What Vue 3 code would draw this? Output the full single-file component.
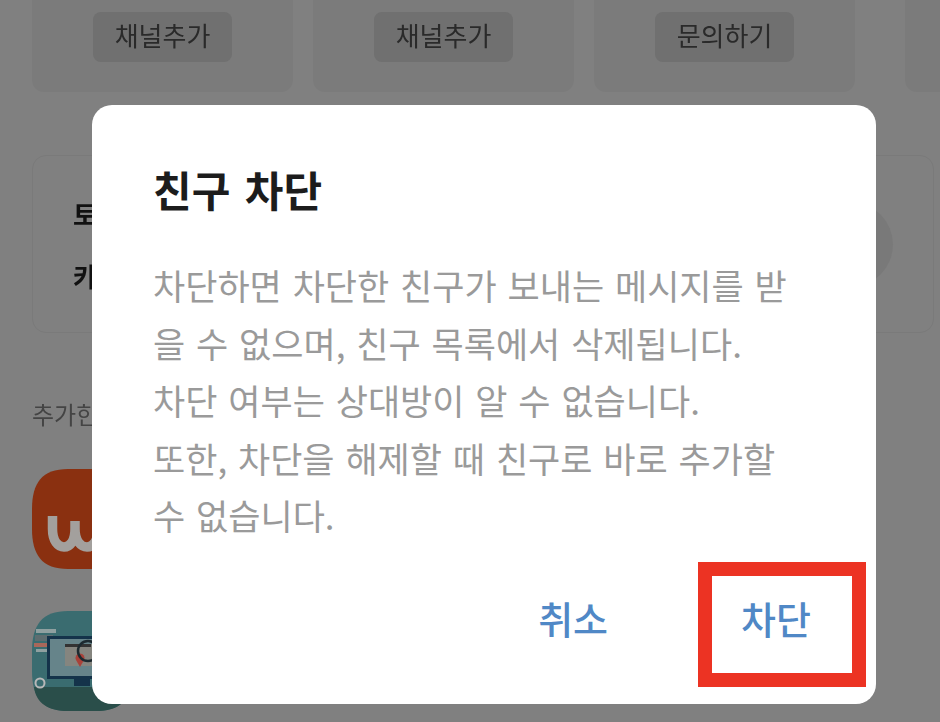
<script setup>
const cards = ['채널추가', '채널추가', '문의하기', '']
const lines = [
  '차단하면 차단한 친구가 보내는 메시지를 받',
  '을 수 없으며, 친구 목록에서 삭제됩니다.',
  '차단 여부는 상대방이 알 수 없습니다.',
  '또한, 차단을 해제할 때 친구로 바로 추가할',
  '수 없습니다.'
]
</script>

<template>
  <div class="screen">
    <div class="page">
      <div class="cards">
        <div v-for="(c, i) in cards" :key="i" class="card" :class="{ last: !c }">
          <div v-if="c" class="chip">{{ c }}</div>
        </div>
      </div>
      <div class="panel">
        <div class="panel-text">
          <div>토스페이</div>
          <div>카카오페이</div>
        </div>
        <div class="pill"></div>
      </div>
      <div class="section">추가한 채널</div>
      <div class="apps">
        <svg class="app" viewBox="0 0 100 100">
          <path d="M36 0H64C90 0 100 14 100 40V60C100 86 90 100 64 100H36C10 100 0 86 0 60V40C0 14 10 0 36 0Z" fill="#8a3010" />
          <path d="M20.500 47V60C20.500 72 26 78 32 78C38 78 43 72 43 60V52M43 60C43 72 49 78 55 78C61 78 66 72 66 60V47" fill="none" stroke="#a3a09d" stroke-width="9.500" />
        </svg>
        <svg class="app" viewBox="0 0 100 100">
          <path d="M36 0H64C90 0 100 14 100 40V60C100 86 90 100 64 100H36C10 100 0 86 0 60V40C0 14 10 0 36 0Z" fill="#3a6c70" />
          <path d="M2 76H98C96 92 84 100 64 100H36C16 100 4 92 2 76Z" fill="#2a4e4a" />
          <rect x="4" y="18" width="20" height="4" fill="#8fa0a0" />
          <rect x="3" y="24" width="18" height="6" fill="#5d6d70" />
          <rect x="2" y="32" width="20" height="4" fill="#a8675a" />
          <rect x="4" y="38" width="12" height="3" fill="#8fa0a0" />
          <circle cx="8" cy="72" r="4.500" fill="none" stroke="#b8b8b8" stroke-width="2" />
          <rect x="15" y="25" width="82" height="43" fill="#14334a" />
          <rect x="18" y="28" width="76" height="37" fill="#66848a" />
          <rect x="33" y="33" width="50" height="22" fill="#85857f" />
          <rect x="33" y="33" width="26" height="3" fill="#333" />
          <path d="M44 49a4.500 4.500 0 1 1 8 0l-4 7Z" fill="#a9423a" />
          <circle cx="56" cy="40" r="10" fill="none" stroke="#1d2a30" stroke-width="2.500" />
          <rect x="42" y="68" width="16" height="7" fill="#14334a" />
        </svg>
      </div>
    </div>

    <section class="dialog">
      <h1 class="title">친구 차단</h1>
      <div class="body">
        <div v-for="l in lines" :key="l">{{ l }}</div>
      </div>
      <div class="actions">
        <span class="action">취소</span>
        <span class="action">차단</span>
      </div>
      <div class="highlight"></div>
    </section>
  </div>
</template>

<style>
html, body { margin: 0; background: #808080; }
</style>

<style scoped>
.screen {
  position: relative;
  width: 940px;
  height: 722px;
  overflow: hidden;
  font-family: "Noto Sans CJK KR", "Noto Sans", sans-serif;
}
.page {
  display: flow-root;
  height: 100%;
  padding-left: 32px;
  box-sizing: border-box;
  background: #808080;
  filter: blur(0.6px);
}
.cards {
  display: flex;
  gap: 20px;
  height: 112px;
  margin-top: -20px;
}
.card {
  flex: 0 0 261px;
  box-sizing: border-box;
  padding-top: 32px;
  display: flex;
  justify-content: center;
  background: #7b7b7b;
  border-radius: 12px;
}
.card.last { flex: 0 0 60px; margin-left: 30px; }
.chip {
  width: 139px;
  height: 50px;
  border-radius: 8px;
  background: #707070;
  display: flex;
  align-items: center;
  justify-content: center;
  font-size: 26px;
  line-height: 46px;
  padding-bottom: 4px;
  box-sizing: border-box;
  color: #2a2a2a;
}
.panel {
  position: relative;
  width: 902px;
  height: 178px;
  margin-top: 63px;
  box-sizing: border-box;
  padding: 27px 0 0 40px;
  border: 1px solid #7a7a7a;
  border-radius: 14px;
}
.panel-text {
  font-size: 26px;
  font-weight: 700;
  line-height: 62px;
  color: #111;
}
.pill {
  position: absolute;
  right: 40px;
  top: 46px;
  width: 120px;
  height: 85px;
  border-radius: 43px;
  background: #797979;
}
.section {
  margin-top: 65px;
  font-size: 24px;
  line-height: 32px;
  color: #444;
}
.apps {
  display: flex;
  flex-direction: column;
  gap: 42px;
  margin-top: 39px;
}
.app {
  display: block;
  width: 100px;
  height: 100px;
}
.dialog {
  position: absolute;
  left: 92px;
  top: 105px;
  width: 784px;
  height: 599px;
  box-sizing: border-box;
  padding: 54px 61px 0;
  background: #fff;
  border-radius: 20px;
}
.title {
  margin: 0;
  font-size: 42px;
  font-weight: 700;
  line-height: 60px;
  word-spacing: 5px;
  color: #1c1c1c;
}
.body {
  margin-top: 37px;
  font-size: 35px;
  line-height: 57.500px;
  word-spacing: 3px;
  color: #9a9a9a;
  white-space: nowrap;
}
.actions {
  display: flex;
  justify-content: flex-end;
  gap: 133px;
  margin-top: 44px;
  padding-right: 4px;
  font-size: 38px;
  font-weight: 500;
  line-height: 60px;
  color: #5088c6;
}
.highlight {
  position: absolute;
  left: 606px;
  top: 457px;
  width: 140px;
  height: 97px;
  border: 14px solid #ec3323;
}
</style>
